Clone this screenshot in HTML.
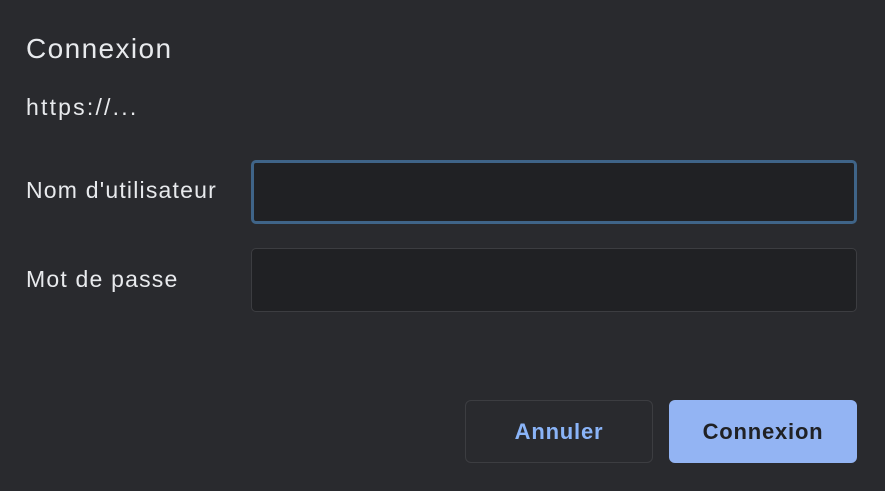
<!DOCTYPE html>
<html><head><style>
html,body{margin:0;padding:0;}
body{width:885px;height:491px;background:#292a2e;font-family:"Liberation Sans",sans-serif;color:#e8eaed;position:relative;overflow:hidden;}
.t{position:absolute;left:26px;white-space:nowrap;}
.in{position:absolute;left:251px;width:606px;background:#202124;box-sizing:border-box;border-radius:5px;}
.btn{position:absolute;top:400px;height:63px;box-sizing:border-box;border-radius:6px;font-size:22px;font-weight:bold;letter-spacing:0.8px;display:flex;align-items:center;justify-content:center;}
</style></head><body>
<div class="t" style="top:33px;font-size:28px;letter-spacing:1.4px;">Connexion</div>
<div class="t" style="top:94px;font-size:23px;letter-spacing:2.2px;">https://...</div>
<div class="t" style="top:177px;font-size:23px;letter-spacing:1.2px;">Nom d'utilisateur</div>
<div class="t" style="top:266px;font-size:23px;letter-spacing:1.2px;">Mot de passe</div>
<div class="in" style="top:160px;height:64px;border:3px solid #3f6488;"></div>
<div class="in" style="top:248px;height:64px;border:1px solid #3c3d41;"></div>
<div class="btn" style="left:465px;width:188px;border:1px solid #3c3d41;color:#8ab4f8;">Annuler</div>
<div class="btn" style="left:669px;width:188px;background:#93b4f3;color:#202124;">Connexion</div>
</body></html>
